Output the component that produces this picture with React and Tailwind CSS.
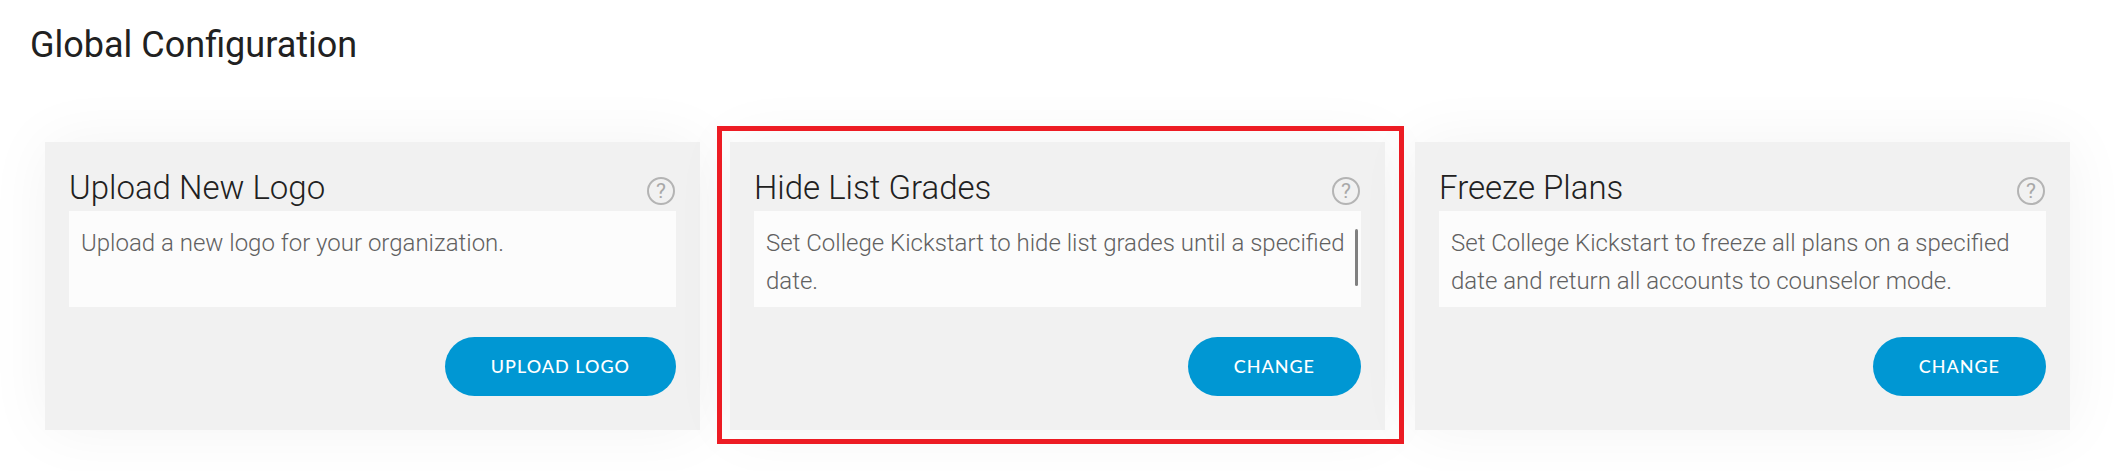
import React from 'react';

const cards = [
  {
    title: 'Upload New Logo',
    text: 'Upload a new logo for your organization.',
    action: 'Upload Logo',
  },
  {
    title: 'Hide List Grades',
    text: 'Set College Kickstart to hide list grades until a specified date.',
    action: 'Change',
    highlighted: true,
  },
  {
    title: 'Freeze Plans',
    text: 'Set College Kickstart to freeze all plans on a specified date and return all accounts to counselor mode.',
    action: 'Change',
  },
];

const HelpIcon = () => (
  <span className="flex h-[28px] w-[28px] items-center justify-center rounded-full border-2 border-[#b4b4b4] text-[21px] leading-none font-normal text-[#a8a8a8]">
    ?
  </span>
);

const ConfigCard = ({ title, text, action, highlighted }) => (
  <div className="relative h-[288px] w-[655px] shrink-0 bg-[#f1f1f1] px-[24px] pt-[24px] shadow-[0_0_60px_rgba(0,0,0,0.05)]">
    <div className="flex h-[45px] items-start justify-between">
      <h2 className="pt-[3px] text-[33px] leading-[38px] font-light text-[#212121]">{title}</h2>
      <div className="mt-[11px] mr-[1px]">
        <HelpIcon />
      </div>
    </div>
    <div className="relative h-[96px] bg-[#fcfcfc] px-[12px] py-[13px]">
      <p className="text-[24px] leading-[38px] font-light text-[#616161]">{text}</p>
      {highlighted && (
        <div className="absolute top-[18px] right-[3px] h-[57px] w-[3px] rounded-full bg-[#808080]" />
      )}
    </div>
    <div className="mt-[30px] flex justify-end">
      <button className="flex h-[59px] items-center justify-center rounded-full bg-[#0097d3] px-[46px] font-['Lato',sans-serif] text-[18px] font-medium tracking-[1px] text-white uppercase">
        {action}
      </button>
    </div>
    {highlighted && (
      <div className="pointer-events-none absolute -top-[16px] -right-[19px] -bottom-[14px] -left-[13px] border-[5px] border-[#ed1c24]" />
    )}
  </div>
);

export default function App() {
  return (
    <div className="h-[471px] overflow-hidden bg-white font-['Roboto',sans-serif]">
      <h1 className="pt-[24px] pl-[30px] text-[36px] leading-[42px] font-normal text-[#212121]">
        Global Configuration
      </h1>
      <div className="mt-[76px] flex gap-[30px] pl-[45px]">
        {cards.map((card) => (
          <ConfigCard key={card.title} {...card} />
        ))}
      </div>
    </div>
  );
}
